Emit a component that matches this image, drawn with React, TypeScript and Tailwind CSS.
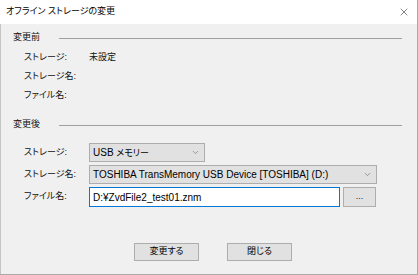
import { ChevronDown, X } from "lucide-react";

const FONT =
  "font-['Liberation_Sans','Noto_Sans_CJK_JP',sans-serif] [font-feature-settings:'palt'] whitespace-nowrap text-[9px] text-[#111]";

/* latin runs are set a bit larger than the kana, as Meiryo UI does */
const LAT = "text-[10px]";

function Group({ title }: { title: string }) {
  return (
    <div className="flex items-center pl-[12px] pr-[15px] h-[20px]">
      <span className="w-[46px] shrink-0">{title}</span>
      <div className="flex-1 h-px bg-[#a0a0a0]" />
    </div>
  );
}

function Row({ label, children }: { label: string; children?: React.ReactNode }) {
  return (
    <div className="flex items-center pl-[23px]">
      <span className="w-[65px] shrink-0">{label}</span>
      {children}
    </div>
  );
}

function Select({ children, width }: { children: React.ReactNode; width: string }) {
  return (
    <div
      className={`flex shrink-0 items-center justify-between h-[19px] border border-[#adadad] bg-[#e1e1e1] pl-[3px] pr-[4px] text-black ${width}`}
    >
      <span>{children}</span>
      <ChevronDown className="h-[9px] w-[9px] text-[#606060]" strokeWidth={1.5} />
    </div>
  );
}

export default function App() {
  return (
    <div className={`${FONT} w-[418px] h-[275px] bg-[#f0f0f0] flex flex-col border-r border-b border-[#aaaaaa]`}>
      {/* Title bar */}
      <div className="h-[24px] shrink-0 bg-white flex items-center justify-between pl-[6px] pr-[7px]">
        <span className="text-black">オフライン ストレージの変更</span>
        <X className="h-[12px] w-[12px] text-[#333]" strokeWidth={1.2} />
      </div>

      <div className="flex flex-1 flex-col pt-[4px] border-l border-[#c4c4c4]">
        <Group title="変更前" />
        <div className="flex flex-col">
          <div className="h-[19px] flex items-center">
            <Row label="ストレージ:">
              <span>未設定</span>
            </Row>
          </div>
          <div className="h-[19px] flex items-center">
            <Row label="ストレージ名:" />
          </div>
          <div className="h-[19px] flex items-center">
            <Row label="ファイル名:" />
          </div>
        </div>

        <div className="pt-[10px]">
          <Group title="変更後" />
        </div>

        <div className="flex flex-col gap-[3px] pt-[8px]">
          <Row label="ストレージ:">
            <Select width="w-[116px]">
              <span className={LAT}>USB </span>メモリー
            </Select>
          </Row>
          <Row label="ストレージ名:">
            <Select width="w-[288px]">
              <span className={LAT}>TOSHIBA TransMemory USB Device [TOSHIBA] (D:)</span>
            </Select>
          </Row>
          <Row label="ファイル名:">
            <div className="h-[20px] w-[251px] shrink-0 border border-[#0078d7] bg-white flex items-center pl-[3px] text-black">
              <span className={LAT}>D:¥ZvdFile2_test01.znm</span>
            </div>
            <button className="ml-[3px] h-[20px] w-[33px] shrink-0 border border-[#adadad] bg-[#e1e1e1] text-[9px] text-[#222] leading-none pb-[2px]">
              ...
            </button>
          </Row>
        </div>

        <div className="flex justify-center gap-[28px] pt-[36px] pl-[8px]">
          <button className="h-[18px] w-[65px] border border-[#adadad] bg-[#e1e1e1] text-black">
            変更する
          </button>
          <button className="h-[18px] w-[65px] border border-[#adadad] bg-[#e1e1e1] text-black">
            閉じる
          </button>
        </div>
      </div>
    </div>
  );
}
